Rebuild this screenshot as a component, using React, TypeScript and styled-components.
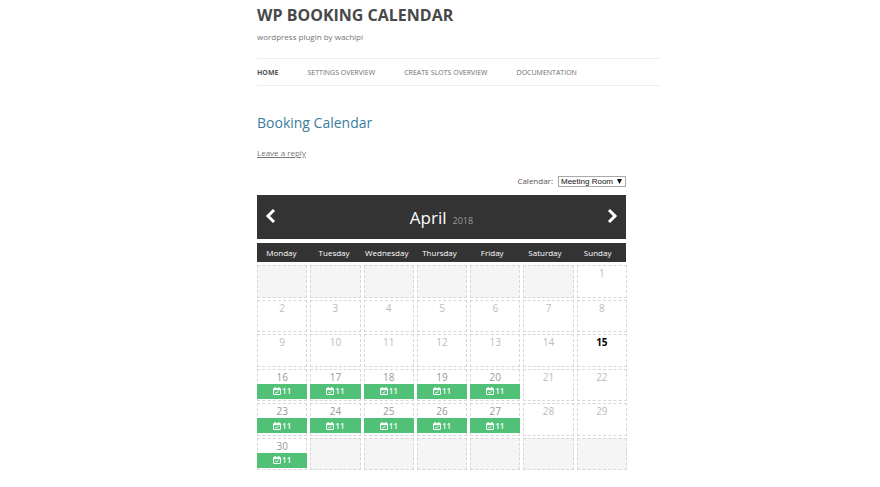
import React, { useState } from "react";
import styled, { createGlobalStyle, css } from "styled-components";

const GlobalStyle = createGlobalStyle`
  *, *::before, *::after { box-sizing: border-box; }
  body {
    margin: 0;
    background: #fff;
    color: #757575;
    font: 8px/12px "Open Sans", "Noto Sans", sans-serif;
  }
`;

const Page = styled.div`
  padding: 3px 25% 16px 257px;
`;

const SiteTitle = styled.h1`
  margin: 0;
  color: #484848;
  font-size: 16px;
  line-height: 24px;
  font-weight: 700;
`;

const Tagline = styled.p`
  margin: 4px 0 15px;
  font-size: 8px;
  line-height: 12px;
`;

const Nav = styled.nav`
  display: flex;
  gap: 29px;
  border: solid #efefef;
  border-width: 1px 0;
`;

const NavLink = styled.a<{ $current?: boolean }>`
  padding-top: 2px;
  color: ${(p) => (p.$current ? "#555" : "#6e6e6e")};
  font-size: 7px;
  line-height: 24px;
  font-weight: ${(p) => (p.$current ? 700 : 400)};
  text-decoration: none;
  text-transform: uppercase;
  white-space: nowrap;
`;

const Entry = styled.article`
  max-width: 369px;
  padding-top: 27px;
`;

const EntryTitle = styled.h2`
  margin: 0 0 14px;
  color: #3b7d9b;
  font-size: 14px;
  line-height: 20px;
  font-weight: 400;
`;

const ReplyLink = styled.a`
  color: #757575;
  font-size: 8px;
  line-height: 12px;
`;

const Picker = styled.div`
  display: flex;
  justify-content: flex-end;
  align-items: center;
  gap: 5px;
  margin: 16px 0 8px;
`;

const PickerLabel = styled.label`
  color: #555;
  font-size: 8px;
  line-height: 12px;
`;

const SelectFrame = styled.span`
  display: grid;
  grid-template-columns: 1fr 8px;
  align-items: center;
  width: 68px;
  height: 11px;
  border: 1px solid #aaa;
  background: #fff;

  svg {
    grid-area: 1 / 2;
    width: 5px;
    height: 5px;
    pointer-events: none;
  }
`;

const Select = styled.select`
  grid-area: 1 / 1 / 2 / 3;
  width: 100%;
  height: 9px;
  padding: 0 2px;
  border: 0;
  appearance: none;
  background: transparent;
  color: #111;
  font: 8px/9px "Liberation Sans", Arial, sans-serif;
`;

const MonthBar = styled.header`
  display: flex;
  align-items: center;
  justify-content: space-between;
  height: 44px;
  padding: 0 8px;
  background: #333;
`;

const ArrowButton = styled.button`
  display: flex;
  padding: 0 0 2px;
  border: 0;
  background: none;
  cursor: pointer;

  svg {
    width: 11px;
    height: 16px;
  }
`;

const MonthName = styled.h3`
  margin: 0;
  padding-top: 4px;
  color: #fff;
  font-size: 17px;
  line-height: 24px;
  font-weight: 400;
`;

const Year = styled.span`
  margin-left: 6px;
  color: #999;
  font-size: 9px;
`;

const MonthTable = styled.table`
  display: block;
  margin-top: 4px;
`;

const WeekHead = styled.thead`
  display: block;
  background: #333;
`;

const columns = css`
  display: grid;
  grid-template-columns: repeat(7, 1fr);
`;

const HeadRow = styled.tr`
  ${columns}
`;

const Weeks = styled.tbody`
  display: grid;
  grid-auto-rows: 1fr;
  row-gap: 2px;
  min-height: 205px;
  margin: 3px -1px 0 0;
`;

const Week = styled.tr`
  ${columns}
  column-gap: 3px;
`;

const WeekDay = styled.th`
  min-width: 0;
  padding: 1px 4px 0 0;
  color: #fff;
  font-size: 8px;
  line-height: 18px;
  font-weight: 400;
  text-align: center;
`;

const Day = styled.td<{ $kind: "blank" | "past" | "today" | "open" }>`
  display: flex;
  flex-direction: column;
  min-width: 0;
  padding: 0;
  border: 1px dashed #d8d8d8;
  color: #bcbcbc;
  font-size: 10px;
  line-height: 14px;
  text-align: center;

  ${(p) => p.$kind === "blank" && css`background: #f5f5f5;`}
  ${(p) => p.$kind === "today" && css`color: #000; font-weight: 700;`}
  ${(p) => p.$kind === "open" && css`color: #999;`}
`;

const SlotButton = styled.button`
  display: flex;
  align-items: center;
  justify-content: center;
  gap: 1px;
  height: 15px;
  margin: 0 -1px;
  padding: 0;
  border: 0;
  background: #50c176;
  color: #fff;
  font: 600 8px/12px "Open Sans", "Noto Sans", sans-serif;
  cursor: pointer;

  svg {
    width: 8px;
    height: 8px;
  }
`;

const Arrow = ({ forward }: { forward?: boolean }) => (
  <svg viewBox="0 0 11 16" fill="none" stroke="#fff" strokeWidth="3" aria-hidden="true">
    <path d={forward ? "M2 2L8 8L2 14" : "M9 2L3 8L9 14"} />
  </svg>
);

const CalendarCheck = () => (
  <svg viewBox="0 0 16 16" fill="none" stroke="#fff" aria-hidden="true">
    <rect x="1" y="3" width="14" height="12" rx="1" strokeWidth="2" />
    <path d="M1 4.500h14" strokeWidth="3.500" />
    <path d="M4.500 0v4M11.500 0v4" strokeWidth="2.600" />
    <path d="M4.500 9.500l2.500 2.500L11.500 8" strokeWidth="2" />
  </svg>
);

const links = ["Home", "Settings Overview", "Create Slots Overview", "Documentation"];
const weekDays = ["Monday", "Tuesday", "Wednesday", "Thursday", "Friday", "Saturday", "Sunday"];
const FIRST_OFFSET = 6;
const DAYS = 30;
const TODAY = 15;
const SLOTS = 11;

function dayKind(day: number, column: number) {
  if (day < 1 || day > DAYS) return "blank";
  if (day === TODAY) return "today";
  return day > TODAY && column < 5 ? "open" : "past";
}

export default function App() {
  const [room, setRoom] = useState("Meeting Room");

  return (
    <>
      <GlobalStyle />
      <Page>
        <SiteTitle>WP BOOKING CALENDAR</SiteTitle>
        <Tagline>wordpress plugin by wachipi</Tagline>
        <Nav>
          {links.map((link, i) => (
            <NavLink key={link} href="#" $current={i === 0}>{link}</NavLink>
          ))}
        </Nav>
        <Entry>
          <EntryTitle>Booking Calendar</EntryTitle>
          <ReplyLink href="#">Leave a reply</ReplyLink>
          <Picker>
            <PickerLabel htmlFor="calendar">Calendar:</PickerLabel>
            <SelectFrame>
              <Select id="calendar" value={room} onChange={(e) => setRoom(e.target.value)}>
                <option>Meeting Room</option>
              </Select>
              <svg viewBox="0 0 5 5" aria-hidden="true"><path d="M0 0h5L2.500 5z" fill="#111" /></svg>
            </SelectFrame>
          </Picker>
          <MonthBar>
            <ArrowButton aria-label="Previous month"><Arrow /></ArrowButton>
            <MonthName>April<Year>2018</Year></MonthName>
            <ArrowButton aria-label="Next month"><Arrow forward /></ArrowButton>
          </MonthBar>
          <MonthTable>
            <WeekHead>
              <HeadRow>
                {weekDays.map((name) => <WeekDay key={name} scope="col">{name}</WeekDay>)}
              </HeadRow>
            </WeekHead>
            <Weeks>
              {Array.from({ length: 6 }, (_, row) => (
                <Week key={row}>
                  {weekDays.map((name, column) => {
                    const day = row * 7 + column - FIRST_OFFSET + 1;
                    const kind = dayKind(day, column);
                    return (
                      <Day key={name} $kind={kind}>
                        {kind !== "blank" && <span>{day}</span>}
                        {kind === "open" && (
                          <SlotButton><CalendarCheck />{SLOTS}</SlotButton>
                        )}
                      </Day>
                    );
                  })}
                </Week>
              ))}
            </Weeks>
          </MonthTable>
        </Entry>
      </Page>
    </>
  );
}
